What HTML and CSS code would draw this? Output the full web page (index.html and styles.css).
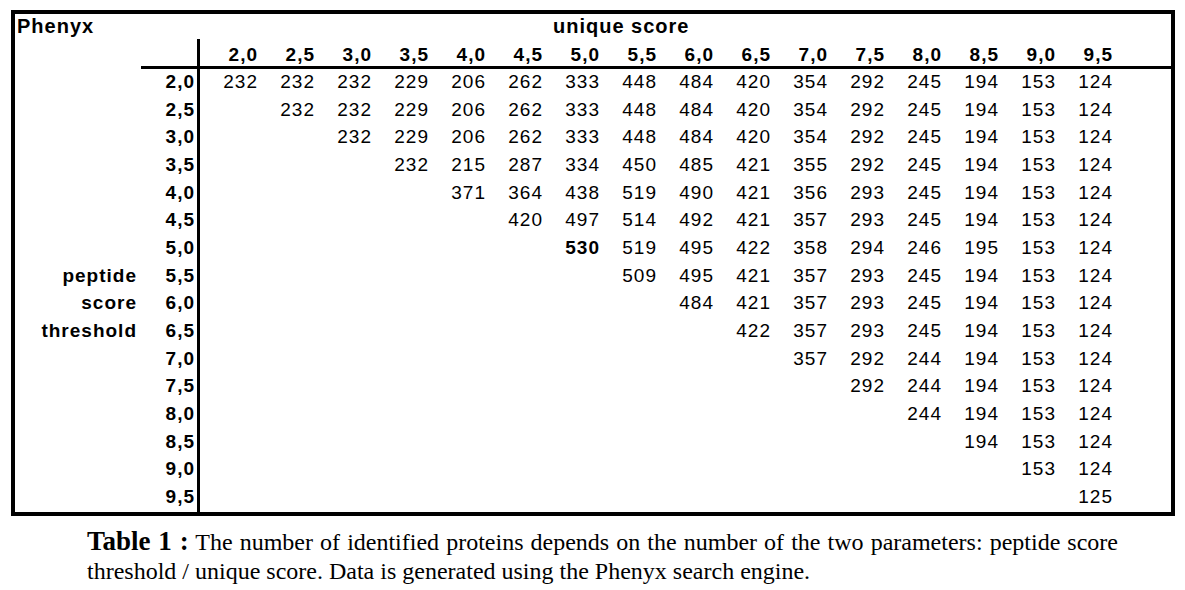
FILE: index.html
```html
<!DOCTYPE html>
<html>
<head>
<meta charset="utf-8">
<link rel="stylesheet" href="styles.css">
</head>
<body>
<div class="box">
  <div class="row title">
    <span class="phenyx">Phenyx</span>
    <span class="unique">unique score</span>
  </div>
  <div class="row head">
    <span class="rh"></span><span class="sp"></span>
    <span class="h">2,0</span><span class="h">2,5</span><span class="h">3,0</span><span class="h">3,5</span><span class="h">4,0</span><span class="h">4,5</span><span class="h">5,0</span><span class="h">5,5</span><span class="h">6,0</span><span class="h">6,5</span><span class="h">7,0</span><span class="h">7,5</span><span class="h">8,0</span><span class="h">8,5</span><span class="h">9,0</span><span class="h">9,5</span><span class="fill"></span>
  </div>
  <div class="row"><span class="rh">2,0</span><span class="d s1">232</span><span class="d">232</span><span class="d">232</span><span class="d">229</span><span class="d">206</span><span class="d">262</span><span class="d">333</span><span class="d">448</span><span class="d">484</span><span class="d">420</span><span class="d">354</span><span class="d">292</span><span class="d">245</span><span class="d">194</span><span class="d">153</span><span class="d">124</span></div>
  <div class="row"><span class="rh">2,5</span><span class="d s2">232</span><span class="d">232</span><span class="d">229</span><span class="d">206</span><span class="d">262</span><span class="d">333</span><span class="d">448</span><span class="d">484</span><span class="d">420</span><span class="d">354</span><span class="d">292</span><span class="d">245</span><span class="d">194</span><span class="d">153</span><span class="d">124</span></div>
  <div class="row"><span class="rh">3,0</span><span class="d s3">232</span><span class="d">229</span><span class="d">206</span><span class="d">262</span><span class="d">333</span><span class="d">448</span><span class="d">484</span><span class="d">420</span><span class="d">354</span><span class="d">292</span><span class="d">245</span><span class="d">194</span><span class="d">153</span><span class="d">124</span></div>
  <div class="row"><span class="rh">3,5</span><span class="d s4">232</span><span class="d">215</span><span class="d">287</span><span class="d">334</span><span class="d">450</span><span class="d">485</span><span class="d">421</span><span class="d">355</span><span class="d">292</span><span class="d">245</span><span class="d">194</span><span class="d">153</span><span class="d">124</span></div>
  <div class="row"><span class="rh">4,0</span><span class="d s5">371</span><span class="d">364</span><span class="d">438</span><span class="d">519</span><span class="d">490</span><span class="d">421</span><span class="d">356</span><span class="d">293</span><span class="d">245</span><span class="d">194</span><span class="d">153</span><span class="d">124</span></div>
  <div class="row"><span class="rh">4,5</span><span class="d s6">420</span><span class="d">497</span><span class="d">514</span><span class="d">492</span><span class="d">421</span><span class="d">357</span><span class="d">293</span><span class="d">245</span><span class="d">194</span><span class="d">153</span><span class="d">124</span></div>
  <div class="row"><span class="rh">5,0</span><span class="d s7 best">530</span><span class="d">519</span><span class="d">495</span><span class="d">422</span><span class="d">358</span><span class="d">294</span><span class="d">246</span><span class="d">195</span><span class="d">153</span><span class="d">124</span></div>
  <div class="row"><span class="lbl">peptide</span><span class="rh">5,5</span><span class="d s8">509</span><span class="d">495</span><span class="d">421</span><span class="d">357</span><span class="d">293</span><span class="d">245</span><span class="d">194</span><span class="d">153</span><span class="d">124</span></div>
  <div class="row"><span class="lbl">score</span><span class="rh">6,0</span><span class="d s9">484</span><span class="d">421</span><span class="d">357</span><span class="d">293</span><span class="d">245</span><span class="d">194</span><span class="d">153</span><span class="d">124</span></div>
  <div class="row"><span class="lbl">threshold</span><span class="rh">6,5</span><span class="d s10">422</span><span class="d">357</span><span class="d">293</span><span class="d">245</span><span class="d">194</span><span class="d">153</span><span class="d">124</span></div>
  <div class="row"><span class="rh">7,0</span><span class="d s11">357</span><span class="d">292</span><span class="d">244</span><span class="d">194</span><span class="d">153</span><span class="d">124</span></div>
  <div class="row"><span class="rh">7,5</span><span class="d s12">292</span><span class="d">244</span><span class="d">194</span><span class="d">153</span><span class="d">124</span></div>
  <div class="row"><span class="rh">8,0</span><span class="d s13">244</span><span class="d">194</span><span class="d">153</span><span class="d">124</span></div>
  <div class="row"><span class="rh">8,5</span><span class="d s14">194</span><span class="d">153</span><span class="d">124</span></div>
  <div class="row"><span class="rh">9,0</span><span class="d s15">153</span><span class="d">124</span></div>
  <div class="row"><span class="rh">9,5</span><span class="d s16">125</span></div>
</div>
<p class="caption"><span class="tag">Table 1 :</span> The number of identified proteins depends on the number of the two parameters: peptide score threshold / unique score. Data is generated using the Phenyx search engine.</p>
</body>
</html>
```

FILE: styles.css
```css
html, body {
  margin: 0;
  padding: 0;
  background: #fff;
}

body {
  color: #000;
  font-family: "Liberation Sans", Arial, sans-serif;
}

.box {
  box-sizing: border-box;
  width: 1164px;
  margin: 10px 0 0 11px;
  border: 4px solid #000;
}

.row {
  display: grid;
  grid-template-columns: 126px 59px 9px repeat(16, 57px) 1fr;
  grid-template-rows: 27.67px;
  font-size: 19px;
  letter-spacing: 1px;
  line-height: 25px;
}

.row.title {
  grid-template-rows: 25px;
  font-size: 20px;
  font-weight: bold;
}

.phenyx {
  grid-column: 1 / span 2;
  padding-left: 2px;
}

.unique {
  grid-column: 10 / span 8;
  padding-left: 2px;
}

.row.head {
  grid-template-rows: 30px;
  font-weight: bold;
  line-height: 23px;
}

.head > span {
  border-bottom: 3px solid #000;
}

.head .h {
  padding-top: 4px;
}

.lbl {
  grid-column: 1;
  text-align: right;
  padding-right: 4px;
  font-weight: bold;
}

.rh {
  grid-column: 2;
  text-align: right;
  padding-right: 2px;
  border-right: 3px solid #000;
  font-weight: bold;
}

.h, .d {
  text-align: right;
  padding-right: 8px;
}

.best {
  font-weight: bold;
}

.s1 { grid-column-start: 4; }
.s2 { grid-column-start: 5; }
.s3 { grid-column-start: 6; }
.s4 { grid-column-start: 7; }
.s5 { grid-column-start: 8; }
.s6 { grid-column-start: 9; }
.s7 { grid-column-start: 10; }
.s8 { grid-column-start: 11; }
.s9 { grid-column-start: 12; }
.s10 { grid-column-start: 13; }
.s11 { grid-column-start: 14; }
.s12 { grid-column-start: 15; }
.s13 { grid-column-start: 16; }
.s14 { grid-column-start: 17; }
.s15 { grid-column-start: 18; }
.s16 { grid-column-start: 19; }

.caption {
  width: 1031px;
  margin: 12px 0 0 87px;
  font-family: "Liberation Serif", "Times New Roman", serif;
  font-size: 24px;
  line-height: 29px;
  text-align: justify;
  color: #000;
}

.tag {
  font-size: 27px;
  font-weight: bold;
  line-height: 1;
}
```
